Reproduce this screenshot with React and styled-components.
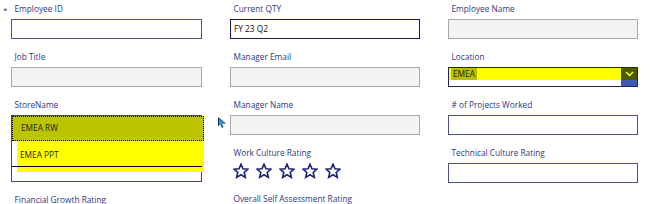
import React from 'react'
import styled, { createGlobalStyle } from 'styled-components'

const Global = createGlobalStyle`
  html, body {
    margin: 0;
    padding: 0;
    background: #fff;
    overflow: hidden;
  }
  body {
    font-family: "Open Sans", "Noto Sans", sans-serif;
  }
`

const Page = styled.div`
  position: relative;
  width: 650px;
  height: 204px;
  overflow: hidden;
`

const Form = styled.div`
  display: grid;
  grid-template-columns: 191px 190px 190px;
  column-gap: 28px;
  padding-left: 11px;
  align-items: start;
`

const Column = styled.div`
  display: flex;
  flex-direction: column;
`

const Field = styled.div`
  position: relative;
  display: flex;
  flex-direction: column;
  margin-bottom: 9px;
`

const Label = styled.div`
  height: 19px;
  line-height: 18px;
  padding-left: 3.5px;
  font-size: 8.3px;
  color: #2f3785;
  white-space: nowrap;
`

const Required = styled.span`
  position: absolute;
  left: -8px;
  top: 0;
  line-height: 19px;
  font-size: 8px;
  color: #2f3785;
`

const Input = styled.div`
  box-sizing: border-box;
  height: 20px;
  border: ${p => (p.$disabled ? '1.5px solid #a8a8a8' : `1.5px solid ${p.$focused ? '#1a1a66' : '#4b5099'}`)};
  background: ${p => (p.$disabled ? '#f3f3f3' : '#fff')};
  font-size: 8.3px;
  color: #111;
  line-height: 17px;
  padding-left: 3px;
`

const Dropdown = styled.div`
  box-sizing: border-box;
  height: 20px;
  border: 1px solid #1e2270;
  display: flex;
  background: #fff;
`

const DropValue = styled.div`
  flex: 1;
  align-self: flex-start;
  height: 12px;
  background: #ffff00;
  font-size: 8.3px;
  line-height: 12px;
  color: #222;
  padding-left: 2px;
`

const Highlight = styled.span`
  background: #b9c000;
  padding: 0 2px;
  display: inline-block;
  width: 22px;
`

const Chevron = styled.div`
  width: 16px;
  display: flex;
  flex-direction: column;
`

const ChevronTop = styled.div`
  height: 12px;
  background: #4a5a00;
  display: flex;
  align-items: center;
  justify-content: center;
`

const ChevronBottom = styled.div`
  flex: 1;
  background: #3d5aae;
`

const ListBox = styled.div`
  position: relative;
  box-sizing: border-box;
  height: 67px;
  border: 1.5px solid #3e4594;
  background: #fff;
`

const Item = styled.div`
  box-sizing: border-box;
  height: ${p => p.$h}px;
  margin-left: ${p => p.$indent}px;
  margin-right: -3px;
  background: ${p => p.$bg};
  border: ${p => (p.$selected ? '1.5px dotted #000' : 'none')};
  font-size: 8.3px;
  color: #222;
  line-height: ${p => (p.$selected ? 21 : 28)}px;
  padding-left: ${p => 8 - p.$indent}px;
`

const Rule = styled.div`
  position: absolute;
  left: 0;
  right: -1px;
  top: 50px;
  height: 1px;
  background: #000;
`

const Stars = styled.div`
  height: 18px;
  display: flex;
  gap: 7px;
  padding-left: 3px;
`

const Cursor = styled.div`
  position: absolute;
  left: 218px;
  top: 117px;
  width: 8px;
  height: 11px;
  background: #14304f;
  clip-path: polygon(0 0, 0 85%, 30% 66%, 50% 100%, 68% 92%, 48% 60%, 100% 60%);
`

const CursorFill = styled.div`
  position: absolute;
  left: 1px;
  top: 1.6px;
  width: 6px;
  height: 8px;
  background: #1ea0e6;
  clip-path: polygon(0 0, 0 85%, 30% 66%, 50% 100%, 62% 94%, 44% 60%, 100% 60%);
`

const StarIcon = () => (
  <svg width="16" height="16" viewBox="0 0 24 24">
    <path
      d="M12 1.8l3 6.9 7.4.6-5.6 4.9 1.7 7.3L12 17.6l-6.5 3.9 1.7-7.3-5.6-4.9 7.4-.6z"
      fill="none"
      stroke="#1c2272"
      strokeWidth="2.4"
      strokeLinejoin="miter"
    />
  </svg>
)

export default function App() {
  return (
    <Page>
      <Global />
      <Form>
        <Column>
          <Field>
            <Required>*</Required>
            <Label>Employee ID</Label>
            <Input />
          </Field>
          <Field>
            <Label>Job Title</Label>
            <Input $disabled />
          </Field>
          <Field>
            <Label>StoreName</Label>
            <ListBox>
              <Item $h={25} $indent={0} $bg="#bcc400" $selected>EMEA RW</Item>
              <Item $h={31} $indent={5} $bg="#ffff00">EMEA PPT</Item>
              <Rule />
            </ListBox>
          </Field>
          <Field>
            <Label>Financial Growth Rating</Label>
          </Field>
        </Column>
        <Column>
          <Field>
            <Label>Current QTY</Label>
            <Input $focused>FY 23 Q2</Input>
          </Field>
          <Field>
            <Label>Manager Email</Label>
            <Input $disabled />
          </Field>
          <Field>
            <Label>Manager Name</Label>
            <Input $disabled />
          </Field>
          <Field>
            <Label>Work Culture Rating</Label>
            <Stars>
              {[0, 1, 2, 3, 4].map(i => <StarIcon key={i} />)}
            </Stars>
          </Field>
          <Field>
            <Label>Overall Self Assessment Rating</Label>
          </Field>
        </Column>
        <Column>
          <Field>
            <Label>Employee Name</Label>
            <Input $disabled />
          </Field>
          <Field>
            <Label>Location</Label>
            <Dropdown>
              <DropValue><Highlight>EMEA</Highlight></DropValue>
              <Chevron>
                <ChevronTop>
                  <svg width="9" height="6" viewBox="0 0 9 6">
                    <path d="M1 1l3.5 3.5L8 1" fill="none" stroke="#ffff00" strokeWidth="1.5" />
                  </svg>
                </ChevronTop>
                <ChevronBottom />
              </Chevron>
            </Dropdown>
          </Field>
          <Field>
            <Label># of Projects Worked</Label>
            <Input />
          </Field>
          <Field>
            <Label>Technical Culture Rating</Label>
            <Input />
          </Field>
        </Column>
      </Form>
      <Cursor>
        <CursorFill />
      </Cursor>
    </Page>
  )
}
